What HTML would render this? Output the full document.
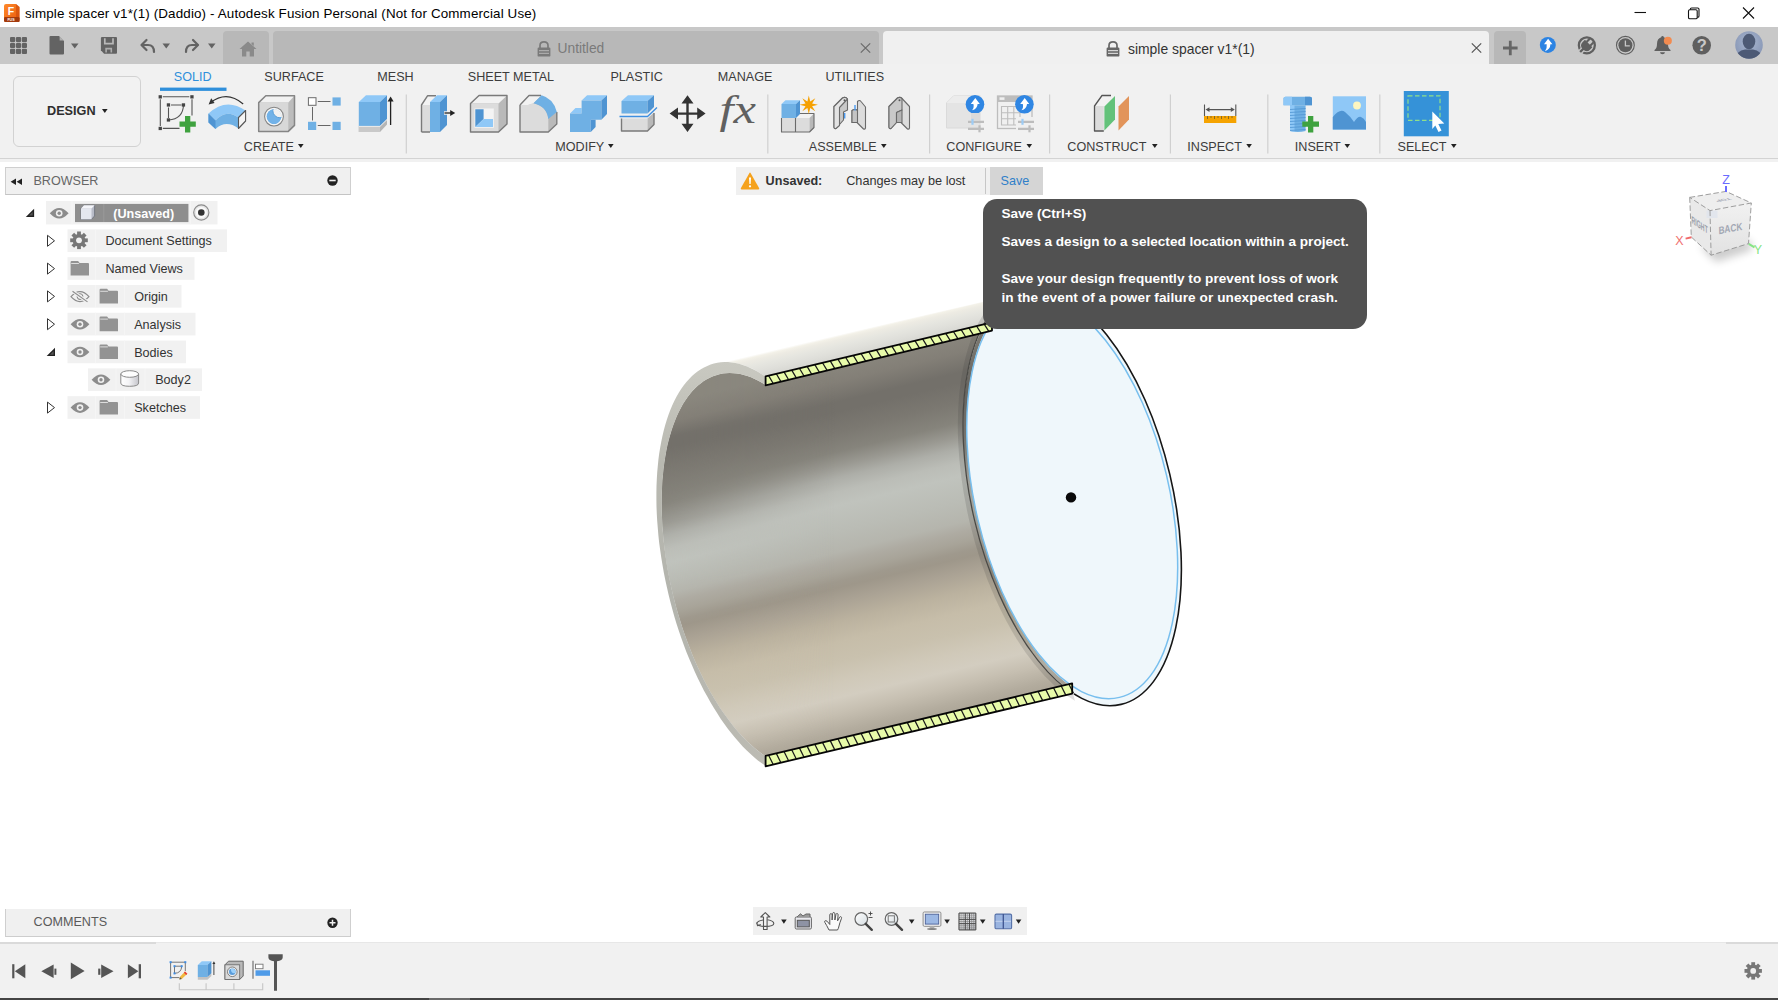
<!DOCTYPE html>
<html><head><meta charset="utf-8">
<style>
*{box-sizing:border-box;margin:0;padding:0}
html,body{width:1778px;height:1000px;overflow:hidden;background:#fff;font-family:"Liberation Sans",Arial,sans-serif;color:#333}
.abs{position:absolute}
#title{left:0;top:0;width:1778px;height:27px;background:#fff}
#title .t{left:25px;top:6px;font-size:13.4px;letter-spacing:.14px;color:#000;white-space:nowrap}
#tabbar{left:0;top:27px;width:1778px;height:38px;background:#c8c8c8}
#toolbar{left:0;top:64px;width:1778px;height:98px;background:#f1f1f1}
#tbline{left:0;top:157.900px;width:1778px;height:1.400px;background:#d3d3d3}
.tab{top:31.300px;height:32.700px;border-radius:4px 4px 0 0}
.rt{font-size:13px;color:#333;top:69px;white-space:nowrap}
.gl{font-size:13px;color:#333;top:138px;white-space:nowrap}
.sep{top:95px;width:1px;height:58px;background:#d0d0d0}
#canvas{left:0;top:162px;width:1778px;height:781px;background:#fff}
#timeline{left:0;top:942.300px;width:1778px;height:56px;background:#f1f1f1;border-top:1.600px solid #e7e7e7}
#bottomline{left:0;top:998px;width:1778px;height:2px;background:#444}
.row{height:22px;background:#f0f0f0}
.rl{font-size:13px;color:#333;white-space:nowrap}
.tt{font-size:13.600px;font-weight:bold;color:#fff;white-space:nowrap;line-height:16px}
</style></head><body>
<div id="title" class="abs"><div class="abs t">simple spacer v1*(1) (Daddio) - Autodesk Fusion Personal (Not for Commercial Use)</div></div>
<div id="tabbar" class="abs"></div>
<div id="toolbar" class="abs"></div>
<div id="tbline" class="abs"></div>
<div id="canvas" class="abs"></div>
<div id="timeline" class="abs"></div>
<div id="bottomline" class="abs"></div>
<div class="abs" style="left:0;top:942.300px;width:155.500px;height:1.600px;background:#dadada"></div><div class="abs" style="left:1726px;top:942.300px;width:52px;height:1.600px;background:#dadada"></div>

<!-- title icon + window controls -->
<svg class="abs" style="left:3px;top:3px" width="18" height="20" viewBox="0 0 18 20">
<defs><linearGradient id="fg" x1="0" y1="0" x2="1" y2="1"><stop offset="0" stop-color="#ff8a2a"/><stop offset="1" stop-color="#e8580c"/></linearGradient></defs>
<path d="M1 3 Q1 1 3 1 L13 1 L16.5 4 L16.5 17 Q16.5 19 14.5 19 L3 19 Q1 19 1 17Z" fill="url(#fg)"/>
<path d="M13 1 L16.5 4 L16.5 19 L13 19Z" fill="#c9470a" opacity=".55"/>
<rect x="1" y="14" width="15.5" height="5" rx="1.2" fill="#a33a0c"/>
<text x="8" y="11.5" font-size="10.5" font-weight="bold" fill="#fff" text-anchor="middle" font-family="Liberation Sans,sans-serif">F</text>
<text x="8" y="18" font-size="3.6" font-weight="bold" fill="#fff" text-anchor="middle" font-family="Liberation Sans,sans-serif">FUS</text>
</svg>
<svg class="abs" style="left:1630px;top:4px" width="130" height="20" viewBox="0 0 130 20" fill="none" stroke="#111" stroke-width="1.1">
<path d="M4.5 8.5 H16"/>
<rect x="58.500" y="5.800" width="8.700" height="9" rx="1.300"/><path d="M60.300 5.800 V5.300 Q60.300 4 61.600 4 H67.700 Q69 4 69 5.300 V12 Q69 13.300 67.700 13.300 H67.200"/>
<path d="M113 3.5 L124 14.5 M124 3.5 L113 14.5"/>
</svg>
<!-- quick access icons -->
<svg class="abs" style="left:0;top:27px" width="270" height="38" viewBox="0 0 270 38">
<g fill="#636363">
<g id="grid"><rect x="10.0" y="10.0" width="5.200" height="5.200" rx="1.100"/><rect x="15.9" y="10.0" width="5.200" height="5.200" rx="1.100"/><rect x="21.8" y="10.0" width="5.200" height="5.200" rx="1.100"/><rect x="10.0" y="15.9" width="5.200" height="5.200" rx="1.100"/><rect x="15.9" y="15.9" width="5.200" height="5.200" rx="1.100"/><rect x="21.8" y="15.9" width="5.200" height="5.200" rx="1.100"/><rect x="10.0" y="21.8" width="5.200" height="5.200" rx="1.100"/><rect x="15.9" y="21.8" width="5.200" height="5.200" rx="1.100"/><rect x="21.8" y="21.8" width="5.200" height="5.200" rx="1.100"/></g>
<path d="M50.5 9 H59 L64 14 V26.5 Q64 27.5 63 27.5 H50.5 Q49.5 27.5 49.5 26.5 V10 Q49.5 9 50.5 9Z"/>
<path d="M71 16.5 H78.5 L74.75 21.5Z"/>
<path d="M102 9.900 H116 Q117 9.900 117 10.900 V25.800 Q117 26.800 116 26.800 H104.100 L100.900 23.200 V10.900 Q100.900 9.900 102 9.900Z"/>
<path d="M162.5 16.5 H170 L166.25 21.5Z"/>
<path d="M208 16.5 H215.5 L211.75 21.5Z"/>
</g>
<path d="M59.600 9.400 V13.400 H63.600Z" fill="#c8c8c8" opacity=".75"/>
<path d="M104.800 11.200 V16.600 H113 V11.200" fill="none" stroke="#b8b8b8" stroke-width="1.700"/><path d="M106.100 25.600 V21.600 H111.300 V25.600" fill="none" stroke="#adadad" stroke-width="1.600"/>
<g fill="none" stroke="#636363" stroke-width="2.2" stroke-linecap="round" stroke-linejoin="round">
<path d="M146.5 13 L141.5 18 L146.5 23"/><path d="M142 18 H148 Q154 18 154 25"/>
<path d="M193 13 L198 18 L193 23"/><path d="M197.5 18 H192 Q186 18 186 25"/>
</g>
</svg>
<!-- home tab -->
<div class="abs tab" style="left:223px;width:46px;background:#b8b8b8"></div>
<svg class="abs" style="left:238px;top:40px" width="20" height="18" viewBox="0 0 20 18"><path d="M10 1.5 L1.5 9 H4 V16.5 H8.3 V11.5 H11.7 V16.5 H16 V9 H18.5Z M13.5 2.5 h2.3 v3.5 l-2.3 -2Z" fill="#8a8a8a"/></svg>
<!-- Untitled tab -->
<div class="abs tab" style="left:273px;width:606px;background:#b8b8b8"></div>
<svg class="abs" style="left:536px;top:40px" width="16" height="18" viewBox="0 0 16 18"><path d="M4 8 V5.5 Q4 1.8 8 1.8 Q12 1.8 12 5.5 V8" fill="none" stroke="#7a7a7a" stroke-width="1.7"/><rect x="1.6" y="7.6" width="12.8" height="9" rx="1.2" fill="#7a7a7a"/><path d="M3 10.7 H13 M3 13.3 H13" stroke="#b8b8b8" stroke-width="1"/></svg>
<div class="abs" style="left:557.500px;top:40.500px;font-size:13.800px;color:#7a7a7a;margin-top:.8px">Untitled</div>
<svg class="abs" style="left:859px;top:42px" width="13" height="12" viewBox="0 0 13 12"><path d="M1.800 1.300 L11.200 10.700 M11.200 1.300 L1.800 10.700" stroke="#6a6a6a" stroke-width="1.200"/></svg>
<!-- active tab -->
<div class="abs tab" style="left:883px;width:606px;background:#f0f0f0"></div>
<svg class="abs" style="left:1105px;top:40px" width="16" height="18" viewBox="0 0 16 18"><path d="M4 8 V5.5 Q4 1.8 8 1.8 Q12 1.8 12 5.5 V8" fill="none" stroke="#666" stroke-width="1.7"/><rect x="1.6" y="7.6" width="12.8" height="9" rx="1.2" fill="#666"/><path d="M3 10.7 H13 M3 13.3 H13" stroke="#f0f0f0" stroke-width="1"/></svg>
<div class="abs" style="left:1128px;top:40.500px;font-size:13.900px;color:#333;margin-top:.8px">simple spacer v1*(1)</div>
<svg class="abs" style="left:1470px;top:42px" width="13" height="12" viewBox="0 0 13 12"><path d="M1.800 1.300 L11.200 10.700 M11.200 1.300 L1.800 10.700" stroke="#555" stroke-width="1.200"/></svg>
<!-- plus -->
<div class="abs tab" style="left:1494px;width:32px;background:#b8b8b8"></div>
<svg class="abs" style="left:1502px;top:39.700px" width="16" height="16" viewBox="0 0 16 16"><path d="M8.300 0.700 V15.300 M1 8 H15.600" stroke="#666" stroke-width="2.800"/></svg>
<!-- right icons -->
<svg class="abs" style="left:1535px;top:30px" width="243" height="32" viewBox="0 0 243 32">
<circle cx="12.800" cy="14.900" r="8" fill="#2b83e3"/><path d="M13.100 8.800 L9 14.300 H11.700 Q12.300 18.300 10 21.200 Q15.300 19.500 15.400 14.300 H17.400Z" fill="#fff"/>
<circle cx="51.850" cy="15.300" r="8" fill="none" stroke="#5f5f5f" stroke-width="2.300"/>
<g transform="translate(51.850 15.300) rotate(-45)"><rect x="-10.500" y="-2.500" width="5" height="5" fill="#c8c8c8"/><rect x="-9.500" y="-1.200" width="6" height="2.400" fill="#5f5f5f"/><g transform="translate(0.300 0) scale(1.220)"><path d="M-1 -4.300 H1.800 V4.300 H-1 Q-4.800 4.300 -4.800 0 Q-4.800 -4.300 -1 -4.300Z" fill="#5f5f5f"/><rect x="1.500" y="-3" width="3.800" height="1.700" fill="#5f5f5f"/><rect x="1.500" y="1.300" width="3.800" height="1.700" fill="#5f5f5f"/></g></g>
<circle cx="90.400" cy="15.300" r="8.900" fill="none" stroke="#5f5f5f" stroke-width="1.100"/><circle cx="90.400" cy="15.300" r="7" fill="#5f5f5f"/><path d="M90.400 10.500 V15.800 H94.800" fill="none" stroke="#c8c8c8" stroke-width="1.300"/>
<path d="M127.500 6 Q128.600 6 128.800 7.200 Q133 8.500 133 14 Q133 18.500 135.500 20 V21 H119.500 V20 Q122 18.500 122 14 Q122 8.500 126.200 7.200 Q126.400 6 127.500 6Z M125 22.300 H130 Q129.800 24.300 127.500 24.300 Q125.200 24.300 125 22.300Z" fill="#5f5f5f"/><circle cx="132.850" cy="10.800" r="4" fill="#f28b50"/>
<circle cx="166.700" cy="15.300" r="9.300" fill="#5f5f5f"/><text x="166.700" y="21.200" font-size="16.500" font-weight="bold" fill="#c8c8c8" text-anchor="middle" font-family="Liberation Sans,sans-serif">?</text>
<defs><radialGradient id="av" cx=".5" cy=".4" r=".6"><stop offset="0" stop-color="#a9b7d0"/><stop offset="1" stop-color="#8796b5"/></radialGradient><clipPath id="avc"><circle cx="214" cy="15" r="13.800"/></clipPath></defs>
<circle cx="214" cy="15" r="13.800" fill="url(#av)"/>
<g clip-path="url(#avc)"><ellipse cx="214" cy="11.500" rx="6.300" ry="7.800" fill="#4d5a75"/><path d="M200 30 Q201 21 210 19.500 H218 Q227 21 228 30Z" fill="#4d5a75"/></g>
</svg>

<div class="abs" style="left:13px;top:76px;width:128px;height:71px;border:1px solid #d2d2d2;border-radius:6px;background:#f2f2f2"></div>
<svg class="abs" style="left:0;top:64px" width="1778" height="97" viewBox="0 64 1778 97" font-family="Liberation Sans,Arial,sans-serif" font-size="12.600">
<defs>
<g id="dd"><path d="M0 0 H5.6 L2.8 4Z" fill="#222"/></g>
<g id="upc"><circle r="9.3" fill="#2f86e3"/><path d="M0.3 -6.2 L-4.2 -0.4 H-1.6 Q-0.6 3.2 -3 6 Q2.4 4.6 2.6 -0.4 H4.8Z" fill="#fff"/></g>
<g id="sliders"><path d="M0 0 H16 M0 7 H16" stroke="#bdbdbd" stroke-width="2.2"/><path d="M4.500 -3 V3" stroke="#9dccf5" stroke-width="2.2"/><path d="M11.500 3.500 V10.500" stroke="#bdbdbd" stroke-width="2.2"/></g>
</defs>
<!-- tab labels -->
<text x="173.800" y="81.300" fill="#2f8fdb">SOLID</text>
<rect x="160" y="87.600" width="66.500" height="3.300" fill="#2f8fdb"/>
<g fill="#3c3c3c">
<text x="264.300" y="81.300">SURFACE</text>
<text x="377.300" y="81.300">MESH</text>
<text x="467.800" y="81.300">SHEET METAL</text>
<text x="610.400" y="81.300">PLASTIC</text>
<text x="717.800" y="81.300">MANAGE</text>
<text x="825.400" y="81.300">UTILITIES</text>
<text x="47" y="114.800" font-weight="bold" font-size="12.700" fill="#2f2f2f">DESIGN</text>
<text x="243.800" y="150.500">CREATE</text>
<text x="555.300" y="150.500">MODIFY</text>
<text x="808.800" y="150.500">ASSEMBLE</text>
<text x="946.300" y="150.500">CONFIGURE</text>
<text x="1067.300" y="150.500">CONSTRUCT</text>
<text x="1187.300" y="150.500">INSPECT</text>
<text x="1294.800" y="150.500">INSERT</text>
<text x="1397.500" y="150.500">SELECT</text>
</g>
<use href="#dd" x="102" y="109"/>
<use href="#dd" x="298" y="144"/>
<use href="#dd" x="608" y="144"/>
<use href="#dd" x="881" y="144"/>
<use href="#dd" x="1026.500" y="144"/>
<use href="#dd" x="1152" y="144"/>
<use href="#dd" x="1246.300" y="144"/>
<use href="#dd" x="1344.500" y="144"/>
<use href="#dd" x="1451" y="144"/>
<!-- separators -->
<g stroke="#d0d0d0" stroke-width="1.2">
<path d="M406.300 94.500 V153.500 M767.800 94.500 V153.500 M929.600 94.500 V153.500 M1049.600 94.500 V153.500 M1170.400 94.500 V153.500 M1267.800 94.500 V153.500 M1379.800 94.500 V153.500"/>
</g>
<!--ICONS1S--><!-- 1 sketch -->
<g fill="none" stroke="#555" stroke-width="1.1">
<path d="M162.800 96.800 H189.300 M162.800 128.400 H179.500 M160.300 99.300 V126 M192 99.300 V115.500"/>
<path d="M171 105 H181.500 M168.500 107.500 V118"/>
<path d="M183.500 105 Q183 119 168.500 120"/>
</g>
<g fill="#444"><rect x="158.600" y="95.200" width="3.300" height="3.300"/><rect x="190.300" y="95.200" width="3.300" height="3.300"/><rect x="158.600" y="126.800" width="3.300" height="3.300"/>
<rect x="166.800" y="103.300" width="3.300" height="3.300"/><rect x="181.800" y="103.300" width="3.300" height="3.300"/><rect x="166.800" y="118.300" width="3.300" height="3.300"/></g>
<path d="M185 116 h5.300 v5.500 h5.500 v5.300 h-5.500 v5.700 h-5.300 v-5.700 h-5.500 v-5.300 h5.500Z" fill="#3fa23f"/>
<!-- 2 revolve/sweep -->
<path d="M243.200 104 Q227 90 210.500 102.500" fill="none" stroke="#333" stroke-width="1.100"/>
<path d="M208.600 104.500 L211.200 98.300 L214.600 103Z" fill="#333"/>
<path d="M208.500 113.500 Q226 97 245.600 110.500 L238.500 117.500 Q226 108.500 215.500 120.500Z" fill="#8fc8f7"/>
<path d="M208.500 113.500 L215.500 120.500 Q226 108.500 238.500 117.500 L238.500 128.500 Q226 119.500 215.500 129 L208.500 122.500Z" fill="#6fb0e4"/>
<path d="M208.500 113.500 L215.500 120.500 V129 L208.500 122.500Z" fill="#4f94d2"/>
<path d="M238.500 117.500 L245.600 110.500 V121 L238.500 128.500Z" fill="#f4f4f4" stroke="#555" stroke-width="1.100" stroke-linejoin="round"/>
<!-- 3 hole -->
<path d="M258.700 102.600 L265.800 95.750 H294.500 V125.400 L288.300 131.400 H258.700Z" fill="#bcbcbc"/>
<path d="M258.700 102.600 L265.800 95.750 H294.500 L288.300 102.600Z" fill="#f2f2f2"/>
<rect x="258.700" y="102.600" width="29.600" height="28.800" fill="#d8d8d8"/>
<path d="M258.700 102.600 L265.800 95.750 H294.500 V125.400 L288.300 131.400 H258.700Z" fill="none" stroke="#858585" stroke-width="1.500" stroke-linejoin="round"/>
<clipPath id="hclip"><circle cx="274" cy="116.600" r="7.600"/></clipPath>
<circle cx="274" cy="116.600" r="9.400" fill="#f6f6f6" stroke="#858585" stroke-width="1.100"/>
<g clip-path="url(#hclip)"><circle cx="274" cy="116.600" r="7.600" fill="#72b2e8"/><circle cx="280" cy="110.600" r="7.200" fill="#f1f1f1" stroke="#5a9fd8" stroke-width="1"/></g>
<!-- 4 pattern -->
<path d="M317.800 101.500 H330.500 M312.500 107 V120.500 M317.800 125.500 H330.500" stroke="#666" stroke-width="1" fill="none"/>
<rect x="308.400" y="97.700" width="7.600" height="7.600" fill="#fff" stroke="#6a6a6a" stroke-width="1"/>
<rect x="332.500" y="97.400" width="8.200" height="8.200" fill="#6fb0e4"/>
<rect x="308" y="121.800" width="8.200" height="8.200" fill="#6fb0e4"/>
<rect x="332.500" y="121.800" width="8.200" height="8.200" fill="#6fb0e4"/>
<!-- 5 extrude -->
<path d="M358.800 126 H380 L387 119 V124.500 L380 132 H358.800Z" fill="#b5b5b5"/>
<path d="M358.800 126 H380 V132 H358.800Z" fill="#c9c9c9"/>
<path d="M358.800 102 L366 95.200 H387 L380 102Z" fill="#8fc8f7"/>
<rect x="358.800" y="102" width="21.200" height="24" fill="#6fb0e4"/>
<path d="M380 102 L387 95.200 V119 L380 126Z" fill="#4f94d2"/>
<path d="M358.800 126.400 H380 L387 119.600" fill="none" stroke="#ececec" stroke-width="1"/><path d="M390.600 125 V100" stroke="#222" stroke-width="1.300"/><path d="M390.600 96.500 L387.600 101.500 H393.600Z" fill="#222"/>
<!-- 6 press pull -->
<path d="M421.500 105 L427.500 95.800 H436 L430 105Z" fill="#f2f2f2"/>
<path d="M421.500 105 H430 V132 H421.500Z" fill="#dcdcdc"/>
<path d="M421.500 132 V105 L427.500 95.800 H436 M421.500 132 H430" fill="none" stroke="#7a7a7a" stroke-width="1.400" stroke-linejoin="round"/>
<path d="M430 102 L437 95.200 H447 L440 102Z" fill="#8fc8f7"/>
<rect x="430" y="102" width="10" height="30" fill="#6fb0e4"/>
<path d="M440 102 L447 95.200 V125 L440 132Z" fill="#4f94d2"/>
<path d="M444 113 H451" stroke="#f0f0f0" stroke-width="3.500"/>
<path d="M444.500 113 H451" stroke="#222" stroke-width="1.300"/><path d="M455.200 113 L450.200 110 V116Z" fill="#222"/>
<!-- 7 shell -->
<path d="M470.500 103.500 L479 95.500 H507 V124 L498.500 132 H470.500Z" fill="#b9b9b9"/>
<path d="M470.500 103.500 L479 95.500 H507 L498.500 103.500Z" fill="#f2f2f2"/>
<rect x="470.500" y="103.500" width="28" height="28.500" fill="#dcdcdc"/>
<path d="M470.500 103.500 L479 95.500 H507 V124 L498.500 132 H470.500Z" fill="none" stroke="#7a7a7a" stroke-width="1.400" stroke-linejoin="round"/>
<rect x="474.500" y="108.500" width="19.300" height="19.300" fill="#f4f4f4"/>
<path d="M475.300 109.300 H483.600 V119 L475.300 127Z" fill="#4f94d2"/>
<path d="M475.300 127 L483.600 119 H493 V127Z" fill="#8fc8f7"/>
<!-- 8 fillet -->
<path d="M520 105 L529 95.500 H538 Q550 98 556.500 112 V124 L548 132 H520Z" fill="#b9b9b9"/>
<path d="M520 105 H528 L533.500 103.200 Q547 106.500 548.300 119 V132 H520Z" fill="#dcdcdc"/>
<path d="M520 105 L529 95.500 H541.500 L533.500 103.200 L528 105Z" fill="#f2f2f2"/>
<path d="M520 105 L529 95.500 H541 M520 105 V132 H548.300 L556.800 124 V112" fill="none" stroke="#7a7a7a" stroke-width="1.400" stroke-linejoin="round"/>
<path d="M533.500 103.200 L541.500 95.300 Q553.500 98.500 556.800 112 L548.300 119 Q547 106.500 533.500 103.200Z" fill="#6fb0e4"/>
<!-- 9 combine -->
<path d="M581.600 100.500 L587.100 95.200 H607 L601.400 100.500Z M570 113.500 L575.500 108 H581.600 V113.500Z" fill="#8fc8f7"/>
<path d="M581.600 100.500 H601.400 V119.700 H590.800 V132 H570 V113.500 H581.600Z" fill="#6fb0e4"/>
<path d="M601.400 100.500 L607 95.200 V114 L601.400 119.700Z M590.800 119.700 H595.600 V127 L590.800 132Z" fill="#4f94d2"/>
<!-- 10 offset face -->
<path d="M621.500 101 L628 95.200 H654 L647.500 101Z" fill="#8fc8f7"/>
<rect x="621.500" y="101" width="26" height="12.500" fill="#6fb0e4"/>
<path d="M647.500 101 L654 95.200 V107 L647.500 113.500Z" fill="#4f94d2"/>
<path d="M621.500 118.500 H647.500 V131 H621.500Z" fill="#dcdcdc"/>
<path d="M647.500 118.500 L654 112.500 V124.500 L647.500 131Z" fill="#b9b9b9"/>
<path d="M621.500 118.500 V131 H647.500 L654 124.500 V113" fill="none" stroke="#7a7a7a" stroke-width="1.400" stroke-linejoin="round"/>
<path d="M619.500 116.500 H647.500 L657 107.500" fill="none" stroke="#3f8fe0" stroke-width="1.300"/>
<!-- 11 move -->
<path d="M687.500 101 V126 M675 113.600 H700" stroke="#333" stroke-width="2.400"/>
<path d="M687.500 95.200 L693.500 103.500 H681.500Z M687.500 132 L693.500 123.700 H681.500Z M669.600 113.600 L678 107.600 V119.600Z M705.600 113.600 L697.200 107.600 V119.600Z" fill="#333"/>
<!-- 12 fx -->
<text x="719.500" y="123" font-family="Liberation Serif,serif" font-style="italic" font-size="39" fill="#606060" textLength="36.500" lengthAdjust="spacingAndGlyphs">fx</text>
<!--ICONS1E-->
<!--ICONS2S--><!-- 13 new component -->
<path d="M781.500 118 H795.500 V132 H781.500Z" fill="#dcdcdc"/>
<path d="M795.500 118 H809.500 V132 H795.500Z" fill="#dcdcdc"/>
<path d="M795.500 118 L800 113.500 H814 L809.500 118Z" fill="#f2f2f2"/>
<path d="M809.500 118 L814 113.500 V127.500 L809.500 132Z" fill="#b9b9b9"/>
<path d="M781.500 118 V132 H809.500 L814 127.500 V113.500 H800 M795.500 118 V132" fill="none" stroke="#6a6a6a" stroke-width="1.100" stroke-linejoin="round"/>
<path d="M781.500 104 L785.500 100.200 H800 L796 104Z" fill="#8fc8f7"/>
<rect x="781.500" y="104" width="14.500" height="14" fill="#6fb0e4"/>
<path d="M796 104 L800 100.200 V114 L796 118Z" fill="#4f94d2"/>
<path d="M808.8 95.6 L810.2 101.5 L815.3 98.3 L812.1 103.4 L818.0 104.8 L812.1 106.2 L815.3 111.3 L810.2 108.1 L808.8 114.0 L807.4 108.1 L802.3 111.3 L805.5 106.2 L799.6 104.8 L805.5 103.4 L802.3 98.3 L807.4 101.5Z" fill="#f5a000"/>
<!-- 14 joint -->
<g stroke="#6a6a6a" stroke-width="1.100" stroke-linejoin="round">
<path d="M834 106.500 L842.500 98 Q845.500 96.500 847.500 99 V110 L843.500 112 V120 L836 128.500 Q834 129 834 127Z" fill="#c9c9c9"/>
<path d="M834 106.500 L842.500 98 Q845.500 96.500 847.500 99 L839.500 107.500 V125.500 L836 128.500 Q834 129 834 127Z" fill="#e3e3e3"/>
<path d="M857.500 101.500 Q859.500 99.500 861 101.500 L865.500 107 V128 Q865 129.500 863.500 129 L857 122.500 H852 V110.500 Q855 108.500 857.500 110.500Z" fill="#dcdcdc"/>
<path d="M852 110.500 Q855 108.500 857.500 110.500 V122.500 H852Z" fill="#c4c4c4"/>
</g>
<circle cx="844.500" cy="100.300" r="1" fill="#555"/>
<path d="M844.700 113 V118.500 M855 105 V110.500" stroke="#4a9af0" stroke-width="1.400"/>
<!-- 15 as built joint -->
<g stroke="#6a6a6a" stroke-width="1.100" stroke-linejoin="round">
<path d="M889 106.500 L897.500 98 Q900 96.500 902 98.500 L909.500 106.500 V128 Q909 129.500 907.500 129 L901 122.500 H896.500 L891 128.500 Q889 129 889 127Z" fill="#dcdcdc"/>
<path d="M889 106.500 L897.500 98 Q900 96.500 902 98.500 V110 L896.500 112.500 V122.500 L891 128.500 Q889 129 889 127Z" fill="#c9c9c9"/>
<path d="M896.500 112.500 L902 110 V122.500 H896.500Z" fill="#b5b5b5"/>
</g>
<circle cx="899.500" cy="100.300" r="1" fill="#555"/>
<!-- 16 configure 1 -->
<path d="M946.500 103 L954 95.500 H980 V128 H946.500Z" fill="#e4e4e4" stroke="#dadada" stroke-width="1"/>
<path d="M946.500 103 L954 95.500 H980 L975 103Z" fill="#ececec"/>
<use href="#upc" x="975" y="104.300"/>
<rect x="971" y="113" width="9" height="7" fill="#dadada"/>
<use href="#sliders" x="968" y="121.800"/>
<!-- 17 configure 2 -->
<rect x="997.500" y="96" width="34.500" height="32.500" fill="#f0f0f0" stroke="#bdbdbd" stroke-width="1.300"/>
<rect x="997.500" y="96" width="34.500" height="6" fill="#bdbdbd"/>
<rect x="999.500" y="97.300" width="5" height="2.600" fill="#f0f0f0"/>
<path d="M1001.500 106.500 H1020 V125 H1001.500Z M1007.700 106.500 V125 M1013.800 106.500 V125 M1001.500 112.700 H1020 M1001.500 118.800 H1020" fill="none" stroke="#bdbdbd" stroke-width="1.100"/>
<rect x="1016" y="117" width="18" height="14" fill="#f0f0f0"/>
<use href="#upc" x="1024.400" y="104.300"/>
<use href="#sliders" x="1018" y="121.800"/>
<!-- 18 construct -->
<path d="M1094.500 106 L1102 95.500 H1110 L1103.800 106Z" fill="#f2f2f2"/>
<path d="M1094.500 106 H1103.800 V131 H1094.500Z" fill="#dcdcdc"/>
<path d="M1103.800 131 H1094.500 V106 L1102 95.500 H1111" fill="none" stroke="#555" stroke-width="1.300" stroke-linejoin="round"/>
<path d="M1104.400 106.500 L1115 96 V119.500 L1104.400 130.500Z" fill="#63c27a"/>
<path d="M1118.500 106.500 L1129 96 V119.500 L1118.500 130.500Z" fill="#e2945a"/>
<!-- 19 inspect -->
<rect x="1204" y="116" width="32.300" height="7" fill="#f5a300"/>
<path d="M1207.500 116 V119 M1211 116 V118 M1214.500 116 V119 M1218 116 V118 M1221.500 116 V119 M1225 116 V118 M1228.500 116 V119 M1232 116 V118" stroke="#8a6a20" stroke-width="1"/>
<path d="M1204.500 104.500 V116 M1235.800 104.500 V116 M1207 109.600 H1233.500" stroke="#555" stroke-width="1.100"/>
<path d="M1205.500 109.600 L1209.500 107.200 V112Z M1234.800 109.600 L1230.800 107.200 V112Z" fill="#555"/>
<!-- 20 insert bolt -->
<path d="M1283.500 98.500 Q1283.500 96.800 1285.500 96.800 H1310 Q1312 96.800 1312 98.500 V105.300 H1283.500Z" fill="#6fb0e4"/>
<path d="M1283.500 98.500 Q1283.500 96.800 1285.500 96.800 H1292 V105.300 H1283.500Z" fill="#8fc8f7"/><path d="M1305 96.800 H1310 Q1312 96.800 1312 98.500 V105.300 H1305Z" fill="#4f94d2"/>
<path d="M1290 105.300 H1305.600 V131 Q1298 133 1290 131Z" fill="#6fb0e4"/>
<path d="M1290 105.300 H1294.500 V131.800 Q1292 131.600 1290 131Z" fill="#8fc8f7"/>
<path d="M1290 109.500 L1305.600 108.500 M1290 112.500 L1305.600 111.500 M1290 115.500 L1305.600 114.500 M1290 118.500 L1305.600 117.500 M1290 121.500 L1305.600 120.500 M1290 124.500 L1305.600 123.500 M1290 127.500 L1305.600 126.500 M1290 130.500 L1305.600 129.500" stroke="#4f94d2" stroke-width=".8"/>
<path d="M1308 116 h5.300 v5.500 h5.700 v5.300 h-5.700 v5.700 h-5.300 v-5.700 h-5.700 v-5.300 h5.700Z" fill="#3fa23f"/>
<!-- 21 insert image -->
<rect x="1332.800" y="96.300" width="33.200" height="33.300" fill="#8fc8f7"/>
<path d="M1332.800 117 Q1340 108 1345 112 Q1350 116 1354 122 Q1358 116 1361 117 Q1364 118 1366 122 V129.600 H1332.800Z" fill="#4f94d2"/>
<circle cx="1357" cy="105.500" r="3.900" fill="#fdf6c0"/>
<!-- 22 select -->
<rect x="1403.800" y="91" width="45" height="45.300" fill="#3592d8"/>
<rect x="1408" y="95.800" width="32" height="24.500" fill="none" stroke="#8fe08a" stroke-width="1.200" stroke-dasharray="4.500 2.500"/>
<path d="M1432.300 111.500 L1444.300 123.500 L1438.300 124 L1441.500 130.500 L1438.500 132 L1435.300 125.500 L1432.300 129Z" fill="#fff"/>
<!--ICONS2E-->
</svg>

<!--BROWSERS--><div class="abs" style="left:4.800px;top:166.800px;width:346.400px;height:28.200px;background:#f0f0f0;border:1.200px solid #cfcfcf;border-bottom:1.700px solid #c4c4c4"></div>
<svg class="abs" style="left:0;top:161px" width="360" height="270" viewBox="0 161 360 270" font-family="Liberation Sans,Arial,sans-serif" font-size="12.600">
<defs>
<g id="eye"><path d="M-9.400 0 Q-4.500 -5.300 0 -5.300 Q4.500 -5.300 9.400 0 Q4.500 5.300 0 5.300 Q-4.500 5.300 -9.400 0Z" fill="#8c8c8c"/><circle r="3.300" fill="#f0f0f0"/><circle r="1.700" fill="#8c8c8c"/></g>
<g id="folder"><path d="M0 1 Q0 0 1 0 H7.500 L9 2 H17.500 Q18.400 2 18.400 3 V14.600 H0Z" fill="#939393"/><path d="M0.600 2.500 H8.300" stroke="#f0f0f0" stroke-width=".8"/></g>
<g id="tri"><path d="M0 0 L7 5.500 L0 11Z" fill="#fff" stroke="#333" stroke-width="1" stroke-linejoin="round"/></g>
<g id="trid"><path d="M0 8.300 H8.300 V0Z" fill="#222"/><path d="M3.200 6.900 H6.900 V3.200Z" fill="#555"/></g>
</defs>
<!-- header -->
<path d="M10.600 181.800 L16 178.500 V185.100Z M16.600 181.800 L22 178.500 V185.100Z" fill="#222"/>
<text x="33.400" y="185" fill="#666">BROWSER</text>
<circle cx="332.500" cy="180.500" r="5.200" fill="#222"/><rect x="329.300" y="179.700" width="6.400" height="1.600" fill="#f0f0f0"/>
<!-- row backgrounds -->
<g fill="#f1f1f1">
<rect x="46" y="201" width="171.500" height="23.400"/>
<rect x="67.500" y="229.400" width="159.500" height="22.600"/>
<rect x="67.500" y="257.200" width="127" height="22.600"/>
<rect x="67.500" y="285" width="114" height="22.600"/>
<rect x="67.500" y="312.800" width="128" height="22.600"/>
<rect x="67.500" y="340.600" width="118.500" height="22.600"/>
<rect x="88" y="368.400" width="114" height="22.600"/>
<rect x="67.500" y="396.200" width="132.500" height="22.600"/>
</g>
<g stroke="#f6f6f6" stroke-width=".7"><path d="M95.500 229.400 V252 M95.500 257.200 V279.800 M95.500 285 V307.600 M124.500 285 V307.600 M95.500 312.800 V335.400 M124.500 312.800 V335.400 M95.500 340.600 V363.200 M124.500 340.600 V363.200 M116 368.400 V391 M145 368.400 V391 M95.500 396.200 V418.800 M124.500 396.200 V418.800 M72 201 V224.400 M190.500 201 V224.400"/></g>
<!-- root row -->
<use href="#trid" x="25.800" y="208.700"/>
<use href="#eye" x="59.200" y="213.200"/>
<rect x="75" y="203.200" width="113.400" height="19.600" fill="#e4e4e4"/>
<rect x="75" y="204" width="113.400" height="18" fill="#8e8e8e"/>
<path d="M103.800 204 V222" stroke="#9a9a9a" stroke-width="1"/>
<path d="M81 208.500 L84 205.300 H94.600 V216 L91.500 219.300 H81Z" fill="#b8bcc8" stroke="#70747e" stroke-width=".9" stroke-linejoin="round"/>
<path d="M81 208.500 H91.500 V219.300 H81Z" fill="#e4e7ef"/><path d="M81 208.500 L84 205.300 H94.600 L91.500 208.500Z" fill="#f4f5f9"/>
<text x="113.300" y="217.700" fill="#fff" font-weight="bold">(Unsaved)</text>
<circle cx="201.300" cy="212.500" r="7.600" fill="#e6e6e6" stroke="#8a8a8a" stroke-width="1.100"/><circle cx="201.300" cy="212.500" r="5.600" fill="#fafafa"/><circle cx="201.300" cy="212.500" r="3.300" fill="#333"/>
<!-- doc settings -->
<use href="#tri" x="47.500" y="235.300"/>
<g transform="translate(79 240.300)" fill="#777"><circle r="6.300"/><g id="teeth"><rect x="-1.900" y="-8.800" width="3.800" height="17.600"/><rect x="-1.900" y="-8.800" width="3.800" height="17.600" transform="rotate(45)"/><rect x="-1.900" y="-8.800" width="3.800" height="17.600" transform="rotate(90)"/><rect x="-1.900" y="-8.800" width="3.800" height="17.600" transform="rotate(135)"/></g><circle r="2.900" fill="#f1f1f1"/></g>
<text x="105.400" y="245.300" fill="#333">Document Settings</text>
<!-- named views -->
<use href="#tri" x="47.500" y="263.100"/>
<use href="#folder" x="70.600" y="261"/>
<text x="105.400" y="273.100" fill="#333">Named Views</text>
<!-- origin -->
<use href="#tri" x="47.500" y="290.900"/>
<g transform="translate(80 296.600)"><path d="M-9 0 Q-4.500 -5 0 -5 Q4.500 -5 9 0 Q4.500 5 0 5 Q-4.500 5 -9 0Z" fill="none" stroke="#8c8c8c" stroke-width="1.100"/><circle r="2.800" fill="none" stroke="#8c8c8c" stroke-width="1.100"/><path d="M-7.500 -5.300 L7.500 5.300" stroke="#f1f1f1" stroke-width="3.200"/><path d="M-7.500 -5.300 L7.500 5.300" stroke="#8c8c8c" stroke-width="1.100"/></g>
<use href="#folder" x="99.600" y="288.800"/>
<text x="134.200" y="300.900" fill="#333">Origin</text>
<!-- analysis -->
<use href="#tri" x="47.500" y="318.700"/>
<use href="#eye" x="80" y="324.200"/>
<use href="#folder" x="99.600" y="316.600"/>
<text x="134.200" y="328.700" fill="#333">Analysis</text>
<!-- bodies -->
<use href="#trid" x="46.700" y="347.800"/>
<use href="#eye" x="80" y="352"/>
<use href="#folder" x="99.600" y="344.400"/>
<text x="134.200" y="356.500" fill="#333">Bodies</text>
<!-- body2 -->
<use href="#eye" x="101" y="379.800"/>
<defs><linearGradient id="gbody" x1="0" y1="0" x2="1" y2="0"><stop offset="0" stop-color="#ffffff"/><stop offset=".45" stop-color="#f4f4f6"/><stop offset="1" stop-color="#c4c4ca"/></linearGradient></defs>
<path d="M120.800 374 V383 Q120.800 386.300 129.700 386.300 Q138.600 386.300 138.600 383 V374Z" fill="url(#gbody)" stroke="#8a8a8a" stroke-width="1"/>
<ellipse cx="129.700" cy="374" rx="8.900" ry="3.300" fill="#fdfdfd" stroke="#8a8a8a" stroke-width="1"/>
<text x="155.200" y="384.300" fill="#333">Body2</text>
<!-- sketches -->
<use href="#tri" x="47.500" y="402.100"/>
<use href="#eye" x="80" y="407.600"/>
<use href="#folder" x="99.600" y="400"/>
<text x="134.200" y="412.100" fill="#333">Sketches</text>
</svg>
<!--BROWSERE-->
<!--CANVASS--><svg class="abs" style="left:640px;top:280px" width="560" height="500" viewBox="640 280 560 500">
<defs>
<linearGradient id="gin" gradientUnits="userSpaceOnUse" x1="796.6" y1="372.0" x2="889.4" y2="758.7"><stop offset="0.0" stop-color="#8a877e"/><stop offset="0.048" stop-color="#837f77"/><stop offset="0.097" stop-color="#73706a"/><stop offset="0.121" stop-color="#73706a"/><stop offset="0.17" stop-color="#7b7871"/><stop offset="0.219" stop-color="#86847c"/><stop offset="0.2535" stop-color="#9a9992"/><stop offset="0.283" stop-color="#adaea8"/><stop offset="0.317" stop-color="#bbbdb7"/><stop offset="0.351" stop-color="#c0c3bd"/><stop offset="0.415" stop-color="#babcb5"/><stop offset="0.464" stop-color="#b5b5ad"/><stop offset="0.488" stop-color="#aeaba2"/><stop offset="0.513" stop-color="#a8a499"/><stop offset="0.537" stop-color="#9f998d"/><stop offset="0.552" stop-color="#9e978a"/><stop offset="0.586" stop-color="#aaa294"/><stop offset="0.635" stop-color="#bbb29f"/><stop offset="0.684" stop-color="#c6bda9"/><stop offset="0.733" stop-color="#c9c1ae"/><stop offset="0.782" stop-color="#d0c9b9"/><stop offset="0.821" stop-color="#d3cdc0"/><stop offset="0.86" stop-color="#c6bfb1"/><stop offset="0.904" stop-color="#b3ac9e"/><stop offset="0.928" stop-color="#aba496"/><stop offset="1.0" stop-color="#a29b8e"/></linearGradient>
<linearGradient id="gin2" gradientUnits="userSpaceOnUse" x1="796.6" y1="372.0" x2="889.4" y2="758.7"><stop offset="0.0000" stop-color="#8a877e"/><stop offset="0.0480" stop-color="#837f77"/><stop offset="0.0850" stop-color="#73706a"/><stop offset="0.1090" stop-color="#73706a"/><stop offset="0.1580" stop-color="#7b7871"/><stop offset="0.2435" stop-color="#86847c"/><stop offset="0.2935" stop-color="#9a9992"/><stop offset="0.3230" stop-color="#adaea8"/><stop offset="0.3570" stop-color="#bbbdb7"/><stop offset="0.3910" stop-color="#c0c3bd"/><stop offset="0.4350" stop-color="#babcb5"/><stop offset="0.4662" stop-color="#b5b5ad"/><stop offset="0.4880" stop-color="#aeaba2"/><stop offset="0.5130" stop-color="#a8a499"/><stop offset="0.5370" stop-color="#9f998d"/><stop offset="0.5520" stop-color="#9e978a"/><stop offset="0.5860" stop-color="#aaa294"/><stop offset="0.6350" stop-color="#bbb29f"/><stop offset="0.6840" stop-color="#c6bda9"/><stop offset="0.7330" stop-color="#c9c1ae"/><stop offset="0.7820" stop-color="#d0c9b9"/><stop offset="0.8210" stop-color="#d3cdc0"/><stop offset="0.8600" stop-color="#c6bfb1"/><stop offset="0.9040" stop-color="#b3ac9e"/><stop offset="0.9280" stop-color="#aba496"/><stop offset="1.0000" stop-color="#a29b8e"/></linearGradient>
<linearGradient id="gmask" gradientUnits="userSpaceOnUse" x1="655" y1="0" x2="835" y2="0"><stop offset="0" stop-color="#fff"/><stop offset="1" stop-color="#000"/></linearGradient>
<mask id="mleft" maskUnits="userSpaceOnUse" x="640" y="280" width="560" height="500"><rect x="640" y="280" width="560" height="500" fill="url(#gmask)"/></mask>
<linearGradient id="gband" gradientUnits="userSpaceOnUse" x1="850.0" y1="332.0" x2="855.2" y2="353.9"><stop offset="0" stop-color="#ffffff"/><stop offset=".1" stop-color="#f3f1e8"/><stop offset=".22" stop-color="#edebe3"/><stop offset=".45" stop-color="#e6e6e0"/><stop offset=".75" stop-color="#dfdfda"/><stop offset="1" stop-color="#d8d8d3"/></linearGradient>
<linearGradient id="grim" x1="0" y1="0" x2="0" y2="1"><stop offset="0" stop-color="#c9c9c1"/><stop offset=".25" stop-color="#b9b9b1"/><stop offset=".6" stop-color="#b3b4ad"/><stop offset="1" stop-color="#bcbbb3"/></linearGradient>
<radialGradient id="gshade" gradientUnits="userSpaceOnUse" cx="900" cy="560" r="300"><stop offset=".6" stop-color="#000" stop-opacity="0"/><stop offset="1" stop-color="#000" stop-opacity=".12"/></radialGradient>
<clipPath id="cin"><path d="M765.6 384.9 L761.9 382.7 L758.3 380.7 L754.6 378.9 L751.0 377.3 L747.3 376.0 L743.7 374.9 L740.2 374.1 L736.6 373.5 L733.1 373.2 L729.6 373.1 L726.2 373.2 L722.9 373.6 L719.5 374.3 L716.3 375.2 L713.1 376.3 L709.9 377.7 L706.9 379.3 L703.9 381.1 L701.0 383.2 L698.1 385.5 L695.4 388.1 L692.7 390.8 L690.2 393.8 L687.7 397.1 L685.3 400.5 L683.0 404.1 L680.9 408.0 L678.8 412.1 L676.8 416.3 L675.0 420.7 L673.2 425.4 L671.6 430.2 L670.1 435.2 L668.7 440.3 L667.4 445.6 L666.3 451.1 L665.3 456.7 L664.4 462.5 L663.6 468.4 L663.0 474.4 L662.4 480.6 L662.1 486.8 L661.8 493.2 L661.7 499.6 L661.7 506.2 L661.8 512.8 L662.1 519.5 L662.4 526.3 L663.0 533.1 L663.6 539.9 L664.4 546.8 L665.3 553.8 L666.3 560.7 L667.4 567.7 L668.7 574.6 L670.1 581.6 L671.6 588.6 L673.2 595.5 L675.0 602.4 L676.8 609.2 L678.8 616.0 L680.9 622.8 L683.0 629.5 L685.3 636.1 L687.7 642.6 L690.2 649.1 L692.7 655.4 L695.4 661.7 L698.1 667.8 L701.0 673.8 L703.9 679.7 L706.9 685.4 L709.9 691.0 L713.1 696.5 L716.3 701.8 L719.5 706.9 L722.9 711.9 L726.2 716.6 L729.7 721.2 L733.1 725.7 L736.6 729.9 L740.2 733.9 L743.7 737.7 L747.3 741.4 L751.0 744.8 L754.6 748.0 L758.3 750.9 L761.9 753.7 L765.6 756.2 L765.6 755.9 L1072.2 683.4 L992.0 330.6 L765.6 385.3Z"/></clipPath>
</defs>
<path d="M715.0 363.3 L716.6 363.0 L718.2 362.7 L719.9 362.4 L721.5 362.2 L723.2 362.1 L724.9 362.1 L726.6 362.1 L728.3 362.1 L730.0 362.3 L731.7 362.4 L733.5 362.7 L735.2 363.0 L736.9 363.3 L738.7 363.7 L740.5 364.2 L742.2 364.7 L744.0 365.3 L745.8 366.0 L747.6 366.7 L749.4 367.4 L751.2 368.3 L753.0 369.1 L754.8 370.1 L756.6 371.1 L758.4 372.1 L760.2 373.2 L762.0 374.4 L763.8 375.6 L765.6 376.8 L992.0 322.3 L1024.7 292.3Z" fill="url(#gband)"/>
<path d="M765.6 384.9 L761.9 382.7 L758.3 380.7 L754.6 378.9 L751.0 377.3 L747.3 376.0 L743.7 374.9 L740.2 374.1 L736.6 373.5 L733.1 373.2 L729.6 373.1 L726.2 373.2 L722.9 373.6 L719.5 374.3 L716.3 375.2 L713.1 376.3 L709.9 377.7 L706.9 379.3 L703.9 381.1 L701.0 383.2 L698.1 385.5 L695.4 388.1 L692.7 390.8 L690.2 393.8 L687.7 397.1 L685.3 400.5 L683.0 404.1 L680.9 408.0 L678.8 412.1 L676.8 416.3 L675.0 420.7 L673.2 425.4 L671.6 430.2 L670.1 435.2 L668.7 440.3 L667.4 445.6 L666.3 451.1 L665.3 456.7 L664.4 462.5 L663.6 468.4 L663.0 474.4 L662.4 480.6 L662.1 486.8 L661.8 493.2 L661.7 499.6 L661.7 506.2 L661.8 512.8 L662.1 519.5 L662.4 526.3 L663.0 533.1 L663.6 539.9 L664.4 546.8 L665.3 553.8 L666.3 560.7 L667.4 567.7 L668.7 574.6 L670.1 581.6 L671.6 588.6 L673.2 595.5 L675.0 602.4 L676.8 609.2 L678.8 616.0 L680.9 622.8 L683.0 629.5 L685.3 636.1 L687.7 642.6 L690.2 649.1 L692.7 655.4 L695.4 661.7 L698.1 667.8 L701.0 673.8 L703.9 679.7 L706.9 685.4 L709.9 691.0 L713.1 696.5 L716.3 701.8 L719.5 706.9 L722.9 711.9 L726.2 716.6 L729.7 721.2 L733.1 725.7 L736.6 729.9 L740.2 733.9 L743.7 737.7 L747.3 741.4 L751.0 744.8 L754.6 748.0 L758.3 750.9 L761.9 753.7 L765.6 756.2 L765.6 755.9 L1072.2 683.4 L992.0 330.6 L765.6 385.3Z" fill="url(#gin)"/>
<path d="M765.6 384.9 L761.9 382.7 L758.3 380.7 L754.6 378.9 L751.0 377.3 L747.3 376.0 L743.7 374.9 L740.2 374.1 L736.6 373.5 L733.1 373.2 L729.6 373.1 L726.2 373.2 L722.9 373.6 L719.5 374.3 L716.3 375.2 L713.1 376.3 L709.9 377.7 L706.9 379.3 L703.9 381.1 L701.0 383.2 L698.1 385.5 L695.4 388.1 L692.7 390.8 L690.2 393.8 L687.7 397.1 L685.3 400.5 L683.0 404.1 L680.9 408.0 L678.8 412.1 L676.8 416.3 L675.0 420.7 L673.2 425.4 L671.6 430.2 L670.1 435.2 L668.7 440.3 L667.4 445.6 L666.3 451.1 L665.3 456.7 L664.4 462.5 L663.6 468.4 L663.0 474.4 L662.4 480.6 L662.1 486.8 L661.8 493.2 L661.7 499.6 L661.7 506.2 L661.8 512.8 L662.1 519.5 L662.4 526.3 L663.0 533.1 L663.6 539.9 L664.4 546.8 L665.3 553.8 L666.3 560.7 L667.4 567.7 L668.7 574.6 L670.1 581.6 L671.6 588.6 L673.2 595.5 L675.0 602.4 L676.8 609.2 L678.8 616.0 L680.9 622.8 L683.0 629.5 L685.3 636.1 L687.7 642.6 L690.2 649.1 L692.7 655.4 L695.4 661.7 L698.1 667.8 L701.0 673.8 L703.9 679.7 L706.9 685.4 L709.9 691.0 L713.1 696.5 L716.3 701.8 L719.5 706.9 L722.9 711.9 L726.2 716.6 L729.7 721.2 L733.1 725.7 L736.6 729.9 L740.2 733.9 L743.7 737.7 L747.3 741.4 L751.0 744.8 L754.6 748.0 L758.3 750.9 L761.9 753.7 L765.6 756.2 L765.6 755.9 L1072.2 683.4 L992.0 330.6 L765.6 385.3Z" fill="url(#gin2)" mask="url(#mleft)"/>
<path d="M765.6 376.8 L761.8 374.2 L757.9 371.8 L754.1 369.7 L750.3 367.9 L746.5 366.2 L742.7 364.9 L739.0 363.8 L735.3 363.0 L731.6 362.4 L728.0 362.1 L724.4 362.1 L720.8 362.3 L717.4 362.8 L713.9 363.6 L710.6 364.6 L707.3 365.9 L704.0 367.4 L700.9 369.2 L697.8 371.3 L694.9 373.6 L692.0 376.1 L689.2 378.9 L686.4 382.0 L683.8 385.3 L681.3 388.8 L678.9 392.5 L676.6 396.5 L674.4 400.7 L672.4 405.1 L670.4 409.8 L668.6 414.6 L666.9 419.6 L665.3 424.8 L663.8 430.2 L662.5 435.8 L661.3 441.6 L660.2 447.5 L659.2 453.5 L658.4 459.8 L657.8 466.1 L657.2 472.6 L656.8 479.2 L656.5 486.0 L656.4 492.8 L656.4 499.7 L656.5 506.8 L656.8 513.9 L657.2 521.0 L657.8 528.3 L658.4 535.6 L659.2 542.9 L660.2 550.3 L661.3 557.7 L662.5 565.1 L663.8 572.5 L665.3 579.9 L666.9 587.3 L668.6 594.7 L670.4 602.1 L672.4 609.4 L674.4 616.7 L676.6 623.9 L678.9 631.0 L681.3 638.0 L683.8 645.0 L686.4 651.9 L689.2 658.7 L692.0 665.3 L694.9 671.9 L697.8 678.3 L700.9 684.5 L704.0 690.7 L707.3 696.6 L710.6 702.5 L713.9 708.1 L717.4 713.6 L720.8 718.9 L724.4 724.0 L728.0 728.9 L731.6 733.6 L735.3 738.1 L739.0 742.3 L742.7 746.4 L746.5 750.2 L750.3 753.8 L754.1 757.2 L757.9 760.4 L761.8 763.2 L765.6 765.9 L765.6 766.3 L765.6 755.9 L765.6 756.2 L761.9 753.7 L758.3 750.9 L754.6 748.0 L751.0 744.8 L747.3 741.4 L743.7 737.7 L740.2 733.9 L736.6 729.9 L733.1 725.7 L729.7 721.2 L726.2 716.6 L722.9 711.9 L719.5 706.9 L716.3 701.8 L713.1 696.5 L709.9 691.0 L706.9 685.4 L703.9 679.7 L701.0 673.8 L698.1 667.8 L695.4 661.7 L692.7 655.4 L690.2 649.1 L687.7 642.6 L685.3 636.1 L683.0 629.5 L680.9 622.8 L678.8 616.0 L676.8 609.2 L675.0 602.4 L673.2 595.5 L671.6 588.6 L670.1 581.6 L668.7 574.6 L667.4 567.7 L666.3 560.7 L665.3 553.8 L664.4 546.8 L663.6 539.9 L663.0 533.1 L662.4 526.3 L662.1 519.5 L661.8 512.8 L661.7 506.2 L661.7 499.6 L661.8 493.2 L662.1 486.8 L662.4 480.6 L663.0 474.4 L663.6 468.4 L664.4 462.5 L665.3 456.7 L666.3 451.1 L667.4 445.6 L668.7 440.3 L670.1 435.2 L671.6 430.2 L673.2 425.4 L675.0 420.7 L676.8 416.3 L678.8 412.1 L680.9 408.0 L683.0 404.1 L685.3 400.5 L687.7 397.1 L690.2 393.8 L692.7 390.8 L695.4 388.1 L698.1 385.5 L701.0 383.2 L703.9 381.1 L706.9 379.3 L709.9 377.7 L713.1 376.3 L716.3 375.2 L719.5 374.3 L722.9 373.6 L726.2 373.2 L729.6 373.1 L733.1 373.2 L736.6 373.5 L740.2 374.1 L743.7 374.9 L747.3 376.0 L751.0 377.3 L754.6 378.9 L758.3 380.7 L761.9 382.7 L765.6 384.9 L765.6 385.3 L765.6 376.3Z" fill="url(#grim)"/>
<clipPath id="cleft"><path d="M984 300 L1076 706 L940 720 L940 290Z"/></clipPath>
<clipPath id="cright"><path d="M984 290 L1074.500 693 L1060 720 L1200 720 L1200 290Z"/></clipPath>
<ellipse cx="1072.200" cy="497.400" rx="100.300" ry="212.700" transform="rotate(-13.300 1072.200 497.400)" fill="#eff7fb"/>
<g clip-path="url(#cleft)">
<ellipse cx="1072.200" cy="497.400" rx="98.600" ry="209.100" transform="rotate(-13.300 1072.200 497.400)" fill="none" stroke="url(#gin)" stroke-width="3.600"/>
<ellipse cx="1072.200" cy="497.400" rx="98.600" ry="209.100" transform="rotate(-13.300 1072.200 497.400)" fill="none" stroke="#4a4a46" stroke-opacity=".25" stroke-width="3.600"/>
<ellipse cx="1072.200" cy="497.400" rx="100.300" ry="212.700" transform="rotate(-13.300 1072.200 497.400)" fill="none" stroke="#4c4b47" stroke-width="1.300"/>
<ellipse cx="1072.200" cy="497.400" rx="103" ry="216" transform="rotate(-13.300 1072.200 497.400)" fill="none" stroke="#3a3a36" stroke-opacity=".16" stroke-width="5"/>
</g>
<g clip-path="url(#cright)"><ellipse cx="1072.200" cy="497.400" rx="100.300" ry="212.700" transform="rotate(-13.300 1072.200 497.400)" fill="none" stroke="#161616" stroke-width="1.600"/></g>
<ellipse cx="1072.200" cy="497.400" rx="96.900" ry="205.500" transform="rotate(-13.300 1072.200 497.400)" fill="none" stroke="#78bfee" stroke-width="1.500"/>
<path d="M765.600 376.300 L992 322.300 L992 330.600 L765.600 385.300Z" fill="#e8fbaa"/>
<path d="M765.600 755.900 L1072.200 683.400 L1072.200 693.600 L765.600 766.300Z" fill="#e8fbaa"/>
<path d="M768.6 375.6L773.2 383.5M776.3 373.7L780.9 381.6M784.0 371.9L788.6 379.7M791.7 370.1L796.3 377.9M799.4 368.2L804.0 376.0M807.1 366.4L811.7 374.2M814.8 364.6L819.4 372.3M822.5 362.7L827.1 370.4M830.2 360.9L834.8 368.6M837.9 359.1L842.5 366.7M845.6 357.2L850.2 364.9M853.3 355.4L857.9 363.0M861.0 353.5L865.6 361.1M868.7 351.7L873.3 359.3M876.4 349.9L881.0 357.4M884.1 348.0L888.7 355.6M891.8 346.2L896.4 353.7M899.5 344.4L904.1 351.8M907.2 342.5L911.8 350.0M914.9 340.7L919.5 348.1M922.6 338.9L927.2 346.3M930.3 337.0L934.9 344.4M938.0 335.2L942.6 342.5M945.7 333.3L950.3 340.7M953.4 331.5L958.0 338.8M961.1 329.7L965.7 337.0M968.8 327.8L973.4 335.1M976.5 326.0L981.1 333.2M984.2 324.2L988.8 331.4M768.6 755.2L773.2 764.5M776.3 753.4L780.9 762.7M784.0 751.5L788.6 760.8M791.7 749.7L796.3 759.0M799.4 747.9L804.0 757.2M807.1 746.1L811.7 755.4M814.8 744.3L819.4 753.5M822.5 742.4L827.1 751.7M830.2 740.6L834.8 749.9M837.9 738.8L842.5 748.1M845.6 737.0L850.2 746.2M853.3 735.2L857.9 744.4M861.0 733.3L865.6 742.6M868.7 731.5L873.3 740.8M876.4 729.7L881.0 738.9M884.1 727.9L888.7 737.1M891.8 726.1L896.4 735.3M899.5 724.2L904.1 733.5M907.2 722.4L911.8 731.6M914.9 720.6L919.5 729.8M922.6 718.8L927.2 728.0M930.3 717.0L934.9 726.2M938.0 715.1L942.6 724.3M945.7 713.3L950.3 722.5M953.4 711.5L958.0 720.7M961.1 709.7L965.7 718.9M968.8 707.9L973.4 717.0M976.5 706.0L981.1 715.2M984.2 704.2L988.8 713.4M991.9 702.4L996.5 711.5M999.6 700.6L1004.2 709.7M1007.3 698.7L1011.9 707.9M1015.0 696.9L1019.6 706.1M1022.7 695.1L1027.3 704.2M1030.4 693.3L1035.0 702.4M1038.1 691.5L1042.7 700.6M1045.8 689.6L1050.4 698.8M1053.5 687.8L1058.1 696.9M1061.2 686.0L1065.8 695.1M1068.9 684.2L1073.5 693.3" stroke="#1a1a1a" stroke-width="1.250" fill="none"/>
<path d="M765.600 376.300 L992 322.300 L992 330.600 L765.600 385.300Z M765.600 755.900 L1072.200 683.400 L1072.200 693.600 L765.600 766.300Z" fill="none" stroke="#050505" stroke-width="1.800" stroke-linejoin="round"/>
<circle cx="1071" cy="497.400" r="5.200" fill="#0a0a0a"/>
</svg>
<div class="abs" style="left:736px;top:167px;width:307px;height:27.500px;background:#f0f0f0"></div>
<div class="abs" style="left:990px;top:167px;width:53px;height:27.500px;background:#d5d5d5"></div>
<div class="abs" style="left:984.500px;top:168px;width:1px;height:25.500px;background:#c6c6c6"></div>
<svg class="abs" style="left:739px;top:171px" width="22" height="20" viewBox="0 0 22 20"><path d="M10.600 1.800 Q11 1.200 11.400 1.800 L20.200 17.200 Q20.500 18.300 19.500 18.400 H2.500 Q1.500 18.300 1.800 17.200Z" fill="#f5a21d"/><path d="M10 6.500 H12 L11.600 13 H10.400Z" fill="#fff"/><circle cx="11" cy="15.300" r="1.150" fill="#fff"/></svg>
<div class="abs" style="left:765.600px;top:173.500px;font-size:12.600px;font-weight:bold;color:#333;white-space:nowrap">Unsaved:</div>
<div class="abs" style="left:846.200px;top:173.500px;font-size:12.700px;color:#333;white-space:nowrap">Changes may be lost</div>
<div class="abs" style="left:1000.600px;top:173.500px;font-size:12.600px;color:#2f7fc9;white-space:nowrap">Save</div>
<div class="abs" style="left:983px;top:199.300px;width:384.300px;height:129.300px;background:#515151;border-radius:14px"></div>
<div class="abs tt" style="left:1001.400px;top:205.800px">Save (Ctrl+S)</div>
<div class="abs tt" style="left:1001.400px;top:234.100px">Saves a design to a selected location within a project.</div>
<div class="abs tt" style="left:1001.400px;top:271px;letter-spacing:.04px">Save your design frequently to prevent loss of work</div>
<div class="abs tt" style="left:1001.400px;top:290.200px;letter-spacing:.08px">in the event of a power failure or unexpected crash.</div>
<svg class="abs" style="left:1660px;top:165px" width="118" height="110" viewBox="1660 165 118 110" font-family="Liberation Sans,Arial,sans-serif">
<defs><filter id="vb" x="-50%" y="-50%" width="200%" height="200%"><feGaussianBlur stdDeviation="4"/></filter>
<linearGradient id="vcr" x1="0" y1="0" x2="0" y2="1"><stop offset="0" stop-color="#f1f1f1"/><stop offset="1" stop-color="#e2e2e2"/></linearGradient></defs>
<path d="M1700 246 L1716 262 L1752 250 L1750 240Z" fill="#000" opacity=".2" filter="url(#vb)"/>
<path d="M1689.700 197.400 L1726 191.400 L1751.300 203 L1710 210.600Z" fill="#eeeeee"/>
<path d="M1689.700 197.400 L1710 210.600 L1711.100 255.200 L1691.300 237Z" fill="#e9e9e9"/>
<path d="M1710 210.600 L1751.300 203 L1748.500 243.600 L1711.100 255.200Z" fill="url(#vcr)"/>
<rect x="1706.500" y="210.500" width="11" height="7.500" fill="#dfe3ec" opacity=".8"/>
<path d="M1689.700 197.400 L1726 191.400 L1751.300 203 L1710 210.600Z M1689.700 197.400 L1691.300 237 L1711.100 255.200 L1748.500 243.600 L1751.300 203 M1710 210.600 L1711.100 255.200" fill="none" stroke="#939393" stroke-width=".9" stroke-dasharray="5.500 2.500"/>
<text transform="matrix(0.983 -0.181 0.025 1 1730.500 232)" font-size="10.500" font-weight="bold" fill="#a2a7b3" text-anchor="middle" textLength="24" lengthAdjust="spacingAndGlyphs">BACK</text>
<text transform="matrix(0.500 0.340 0.020 1 1699.700 228.500)" font-size="10.500" font-weight="bold" fill="#9a9faa" text-anchor="middle">RIGHT</text>
<text transform="matrix(-0.800 0.150 -0.450 -0.290 1722 199)" font-size="9" font-weight="bold" fill="#a8adb8" text-anchor="middle">TOP</text>
<path d="M1726 186 V192" stroke="#6a6cff" stroke-width="2"/>
<path d="M1685.600 238.600 L1691.500 237.200" stroke="#f06a6a" stroke-width="2"/>
<path d="M1748.700 243.800 L1754.500 247.400" stroke="#86e486" stroke-width="2"/>
<text x="1726" y="183.800" font-size="12.500" fill="#6a6cff" text-anchor="middle">Z</text>
<text x="1679.300" y="244.800" font-size="12.500" fill="#f07070" text-anchor="middle">X</text>
<text x="1758" y="254.300" font-size="12.500" fill="#86e486" text-anchor="middle">Y</text>
</svg>
<div class="abs" style="left:752.800px;top:907.300px;width:274px;height:27.300px;background:#f0f0f0"></div>
<svg class="abs" style="left:750px;top:905px" width="280" height="32" viewBox="750 905 280 32">
<defs><g id="nd"><path d="M0 0 H5.600 L2.800 4.200Z" fill="#222"/></g>
<linearGradient id="glens" x1="0" y1="0" x2="1" y2="1"><stop offset="0" stop-color="#ffffff"/><stop offset="1" stop-color="#d5dde2"/></linearGradient>
<linearGradient id="gmon" x1="0" y1="0" x2="0" y2="1"><stop offset="0" stop-color="#8aa6d8"/><stop offset="1" stop-color="#b7c8ea"/></linearGradient></defs>
<use href="#nd" x="781.100" y="919.500"/><use href="#nd" x="908.900" y="919.500"/><use href="#nd" x="944.300" y="919.500"/><use href="#nd" x="979.900" y="919.500"/><use href="#nd" x="1015.800" y="919.500"/>
<!-- orbit -->
<g fill="none" stroke="#555" stroke-width="1.100" stroke-linejoin="round">
<path d="M763.500 929.500 V917 H760.800 L765.300 912.600 L769.800 917 H767.100 V929.500Z" fill="#f4f4f4"/>
<path d="M767.500 919.800 Q773.800 921 773.800 923.500 Q773.800 926.200 765.300 926.400 Q759 926.300 757.500 924.600"/>
<path d="M763 920 Q757 921 757 923.500"/>
<path d="M756.600 922.500 L757.600 925.800 L760.800 924.600" />
</g>
<!-- look at -->
<g stroke="#666" stroke-width="1" fill="none">
<rect x="795.200" y="917" width="16.200" height="12" rx="1.200" fill="#e9e9ee"/>
<rect x="797.300" y="920.300" width="12" height="6.600" fill="#8e93a4" stroke="#555"/>
<path d="M797 917 L800.500 913.800 L803 916 L806 914 H810 V917" fill="#9a9a9a"/>
</g>
<!-- hand -->
<path d="M829 930 Q826.500 925 824.800 922.300 Q824.300 920.800 825.600 920.600 Q827 920.600 828.600 923 L829.800 924.500 V914.800 Q830 913.600 831 913.600 Q832 913.700 832.100 914.800 V920 L832.600 913.500 Q832.900 912.400 833.900 912.500 Q834.900 912.700 834.900 913.800 V920 L836 914.300 Q836.400 913.300 837.300 913.500 Q838.200 913.800 838.100 914.900 L837.600 920.800 L839.600 917.200 Q840.300 916.400 841.100 916.800 Q841.800 917.300 841.500 918.300 Q839.500 923.500 839 926 Q838.500 928.500 837.500 930Z" fill="#fafafa" stroke="#555" stroke-width="1" stroke-linejoin="round"/>
<!-- zoom -->
<circle cx="861.300" cy="919" r="6.300" fill="url(#glens)" stroke="#666" stroke-width="1.200"/>
<path d="M865.800 923.800 L871.800 929.800" stroke="#444" stroke-width="2.400" stroke-linecap="round"/>
<path d="M868.500 913.500 H872.500 M870.500 911.500 V915.500 M868.500 917.500 H872.500" stroke="#444" stroke-width=".9"/>
<!-- zoom window -->
<circle cx="891.500" cy="919" r="6.300" fill="url(#glens)" stroke="#666" stroke-width="1.200"/>
<rect x="888.200" y="915.800" width="6.200" height="6.200" fill="none" stroke="#777" stroke-width="1"/>
<path d="M896 923.800 L902 929.800" stroke="#444" stroke-width="2.400" stroke-linecap="round"/>
<!-- display -->
<rect x="923.100" y="912" width="17.800" height="14.300" rx="1.200" fill="#f6f6f6" stroke="#8a8a8a" stroke-width="1"/>
<rect x="925.300" y="914.200" width="13.400" height="9.900" fill="#9cb8e4" stroke="#4a5f96" stroke-width=".9"/>
<path d="M930 926.300 H934 L934.600 928.300 H929.400Z" fill="#b0b0b0"/><ellipse cx="932" cy="929" rx="4.900" ry="1" fill="#858585"/>
<!-- grid -->
<defs><linearGradient id="ggrid" x1="0" y1="0" x2="1" y2="1"><stop offset="0" stop-color="#ffffff"/><stop offset="1" stop-color="#b9bcc4"/></linearGradient></defs>
<rect x="959" y="913.100" width="16.800" height="16.800" fill="url(#ggrid)"/>
<path d="M959.00 913.1 V929.9 M961.10 913.1 V929.9 M963.20 913.1 V929.9 M965.30 913.1 V929.9 M967.40 913.1 V929.9 M969.50 913.1 V929.9 M971.60 913.1 V929.9 M973.70 913.1 V929.9 M975.80 913.1 V929.9 M959 913.10 H975.8 M959 915.20 H975.8 M959 917.30 H975.8 M959 919.40 H975.8 M959 921.50 H975.8 M959 923.60 H975.8 M959 925.70 H975.8 M959 927.80 H975.8 M959 929.90 H975.8 " stroke="#8a8a8a" stroke-width=".7" fill="none"/>
<path d="M959.00 913.1 V929.9 M965.30 913.1 V929.9 M969.50 913.1 V929.9 M975.80 913.1 V929.9 M959 913.10 H975.8 M959 919.40 H975.8 M959 923.60 H975.8 M959 929.90 H975.8 " stroke="#4a4a4a" stroke-width=".9" fill="none"/>
<!-- viewports -->
<rect x="995" y="914.100" width="16.600" height="14.700" rx="1.400" fill="#9ab4e0" stroke="#5570a8" stroke-width="1.100"/>
<path d="M995.500 921.300 H1011" stroke="#c8d6f0" stroke-width=".9"/><path d="M1003.300 914.100 V928.800" stroke="#3f5590" stroke-width="1.300"/>
</svg>
<!-- comments -->
<div class="abs" style="left:4.800px;top:908.600px;width:346.400px;height:28.500px;background:#f0f0f0;border:1.200px solid #cfcfcf;border-top:none;border-bottom:1.900px solid #cdcdcd"></div>
<div class="abs" style="left:33.600px;top:915.200px;font-size:12.600px;color:#5a5a5a;white-space:nowrap">COMMENTS</div>
<svg class="abs" style="left:326px;top:916px" width="14" height="14" viewBox="0 0 14 14"><circle cx="6.500" cy="6.700" r="5.200" fill="#222"/><path d="M3.500 6.700 H9.500 M6.500 3.700 V9.700" stroke="#f0f0f0" stroke-width="1.500"/></svg>
<!--CANVASE-->
<!--BOTTOMS--><svg class="abs" style="left:0;top:943px" width="1778" height="55" viewBox="0 943 1778 55">
<g fill="#555">
<rect x="12.200" y="964.200" width="2.200" height="14.100"/><path d="M25.300 964.300 V978.200 L14.800 971.250Z"/>
<path d="M53.600 964.600 V978 L41.300 971.300Z"/><rect x="54.400" y="968.600" width="2" height="6.200"/>
<path d="M70.800 962.500 V979.300 L84.600 970.900Z"/>
<rect x="98.200" y="968.600" width="2.200" height="6.200"/><path d="M101.200 964.600 V978 L113.500 971.300Z"/>
<path d="M127.900 964.300 V978.200 L138.400 971.250Z"/><rect x="138.700" y="964.200" width="2.300" height="14.100"/>
<path d="M268.400 954.300 H282.700 V957.500 Q282.500 960.800 277 961.300 V990.800 H274 V961.300 Q268.600 960.800 268.400 957.500Z"/>
</g>
<path d="M179.300 983.300 V989.700 H262.700 V983.300 M206.100 983.300 V989.700 M233.900 983.300 V989.700" fill="none" stroke="#c6c6c6" stroke-width="1.100"/>
<!-- sketch -->
<g fill="none" stroke="#777" stroke-width="1">
<path d="M170.600 962.200 H185.300 V971 M170.600 962.200 V977.600 H179"/>
<path d="M174.500 966.200 H181.700 M174.500 966.200 V973.400 M181.700 966.200 Q181.500 973 174.500 973.400"/>
</g>
<g fill="#3d8de6"><rect x="169.600" y="961.200" width="2" height="2"/><rect x="184.300" y="961.200" width="2" height="2"/><rect x="169.600" y="976.600" width="2" height="2"/><rect x="173.500" y="965.200" width="2" height="2"/><rect x="180.700" y="965.200" width="2" height="2"/><rect x="173.500" y="972.400" width="2" height="2"/></g>
<path d="M185 971.600 L187.300 973.800 L181.800 979 L179.400 979.500 L179.800 977Z" fill="#f0b840"/><path d="M185 971.600 L187.300 973.800 L186.200 974.900 L183.900 972.700Z" fill="#e83a3a"/><path d="M179.800 977 L181.800 979 L179.400 979.500Z" fill="#555"/>
<!-- extrude -->
<path d="M197.800 977 H207.400 L211.400 973.300 V976 L207.400 979.700 H197.800Z" fill="#c2c2c2"/>
<path d="M197.800 965 L201.800 961.300 H211.400 L207.400 965Z" fill="#8fc8f7"/><rect x="197.800" y="965" width="9.600" height="12" fill="#6fb0e4"/><path d="M207.400 965 L211.400 961.300 V973.300 L207.400 977Z" fill="#4f94d2"/>
<path d="M213.900 975 V963.500" stroke="#333" stroke-width=".9"/><path d="M213.900 961.300 L212.400 964 H215.400Z" fill="#333"/>
<!-- hole -->
<path d="M225 964.800 L228.500 961.200 H243.200 V976 L239.700 979.500 H225Z" fill="#b9b9b9" stroke="#666" stroke-width="1" stroke-linejoin="round"/>
<rect x="225" y="964.800" width="14.700" height="14.700" fill="#d9d9d9" stroke="#666" stroke-width=".8"/>
<circle cx="232.300" cy="971.800" r="4.800" fill="#f2f2f2" stroke="#666" stroke-width=".8"/><circle cx="232.300" cy="971.800" r="3.300" fill="#5a9ddb"/><path d="M231 969 Q230.600 971 232 972.500 Q233.500 973.800 235.400 973 A3.300 3.300 0 0 0 231 969Z" fill="#9bd0fa"/>
<!-- align -->
<path d="M253 960.800 V978.700" stroke="#666" stroke-width="1.100"/>
<rect x="255.500" y="964.200" width="7.500" height="4.500" fill="#fff" stroke="#777" stroke-width=".9"/>
<rect x="255.500" y="970.300" width="14.500" height="5.500" fill="#4f9be8"/>
<!-- gear -->
<g transform="translate(1753.200 970.900)" fill="#777"><circle r="6.300"/><rect x="-1.900" y="-8.700" width="3.800" height="17.400"/><rect x="-1.900" y="-8.700" width="3.800" height="17.400" transform="rotate(45)"/><rect x="-1.900" y="-8.700" width="3.800" height="17.400" transform="rotate(90)"/><rect x="-1.900" y="-8.700" width="3.800" height="17.400" transform="rotate(135)"/><circle r="2.900" fill="#f0f0f0"/></g>
</svg>
<div class="abs" style="left:429px;top:998px;width:41px;height:2px;background:#6a6a6a"></div>
<!--BOTTOME-->
</body></html>
